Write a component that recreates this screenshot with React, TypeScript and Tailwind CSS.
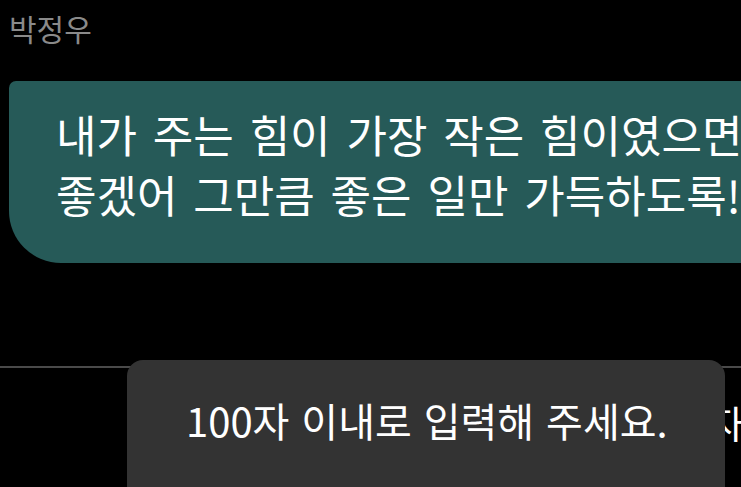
import React from "react";

export default function App() {
  const font = { fontFamily: '"Noto Sans CJK KR", "Noto Sans", sans-serif' };
  return (
    <div
      className="relative w-[741px] h-[487px] overflow-hidden bg-black"
      style={font}
    >
      <div className="pl-[9px] pt-[9px] text-[30px] leading-[38px] text-[#8a8a8a]">
        박정우
      </div>
      <div className="mt-[34px] ml-[9px] w-[780px] rounded-tl-[7px] rounded-bl-[52px] bg-[#265a58] pl-[47px] pt-[23px] pb-[39px] text-[44px] leading-[60px] text-white whitespace-nowrap [word-spacing:6px]">
        <div>내가 주는 힘이 가장 작은 힘이였으면</div>
        <div>좋겠어 그만큼 좋은 일만 가득하도록!</div>
      </div>
      <div className="mt-[103px] h-[2px] bg-[#4a4a4a]" />
      <div className="mt-[30px] pl-[709px] text-[38px] leading-[48px] text-white whitespace-nowrap">
        자
      </div>
      <div className="absolute left-[127px] top-[360px] w-[598px] h-[150px] rounded-[16px] bg-[#333333]">
        <div className="pl-[59px] pt-[36px] text-[40px] leading-[48px] text-white whitespace-nowrap [word-spacing:3px]">
          100자 이내로 입력해 주세요.
        </div>
      </div>
    </div>
  );
}
